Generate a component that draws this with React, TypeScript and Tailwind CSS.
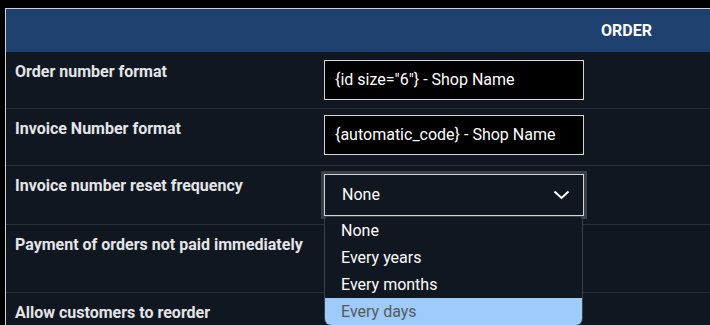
import { ReactNode } from 'react'

const options = ['None', 'Every years', 'Every months', 'Every days']

function Row({ label, h, children }: { label: string; h: string; children?: ReactNode }) {
  return (
    <div className={`flex border-b border-[#2a2f38] ${h}`}>
      <div className="w-[310px] shrink-0 pl-[9px] pt-[8px] text-[16px] leading-6 font-bold text-[#e3e5e8]">{label}</div>
      <div className="relative flex-1 pl-[8px]">{children}</div>
    </div>
  )
}

function TextInput({ value, top }: { value: string; top: string }) {
  return (
    <div className={`${top} flex h-[40px] w-[260px] items-center border border-[#d4d4d4] bg-black pl-[10px] text-[16px] text-white`}>
      {value}
    </div>
  )
}

export default function App() {
  return (
    <div className="h-[325px] w-[710px] overflow-hidden bg-black pl-[5px] pt-[8px]" style={{ fontFamily: 'Roboto, "Liberation Sans", sans-serif' }}>
      <div className="h-full border-l border-t border-[#d2d2d2] bg-[#111720]">
        <div className="flex h-[43px] items-center bg-[#1e416f]">
          <div className="w-[590px]" />
          <div className="flex-1 pl-[5px] text-[16px] font-bold text-white">ORDER</div>
        </div>
        <Row label="Order number format" h="h-[57px]">
          <TextInput value={'{id size="6"} - Shop Name'} top="mt-[8px]" />
        </Row>
        <Row label="Invoice Number format" h="h-[57px]">
          <TextInput value="{automatic_code} - Shop Name" top="mt-[6px]" />
        </Row>
        <Row label="Invoice number reset frequency" h="h-[59px]">
          <div className="mt-[8px] flex h-[42px] w-[260px] items-center justify-between border border-[#d4d4d4] bg-[#111720] pl-[17px] pr-[13px] text-[16px] text-white outline outline-[3px] outline-[#3b4049]">
            <span>None</span>
            <svg width="17" height="10" viewBox="0 0 17 10" fill="none">
              <path d="M1.5 1.5 L8.5 8 L15.5 1.5" stroke="white" strokeWidth="2" />
            </svg>
          </div>
          <div className="absolute left-[8px] top-[50px] z-10 w-[259px] overflow-hidden rounded-b-[7px] rounded-t-[4px] border border-[#3a3f48] bg-[#111720] text-[16px]">
            {options.map((o, i) => (
              <div
                key={o}
                className={`flex h-[27px] items-center pl-[16px] ${i === 3 ? 'bg-[#9ecbf9] text-[#555a60]' : 'text-white'}`}
              >
                {o}
              </div>
            ))}
          </div>
        </Row>
        <Row label="Payment of orders not paid immediately" h="h-[68px]" />
        <Row label="Allow customers to reorder" h="h-[60px]" />
      </div>
    </div>
  )
}
